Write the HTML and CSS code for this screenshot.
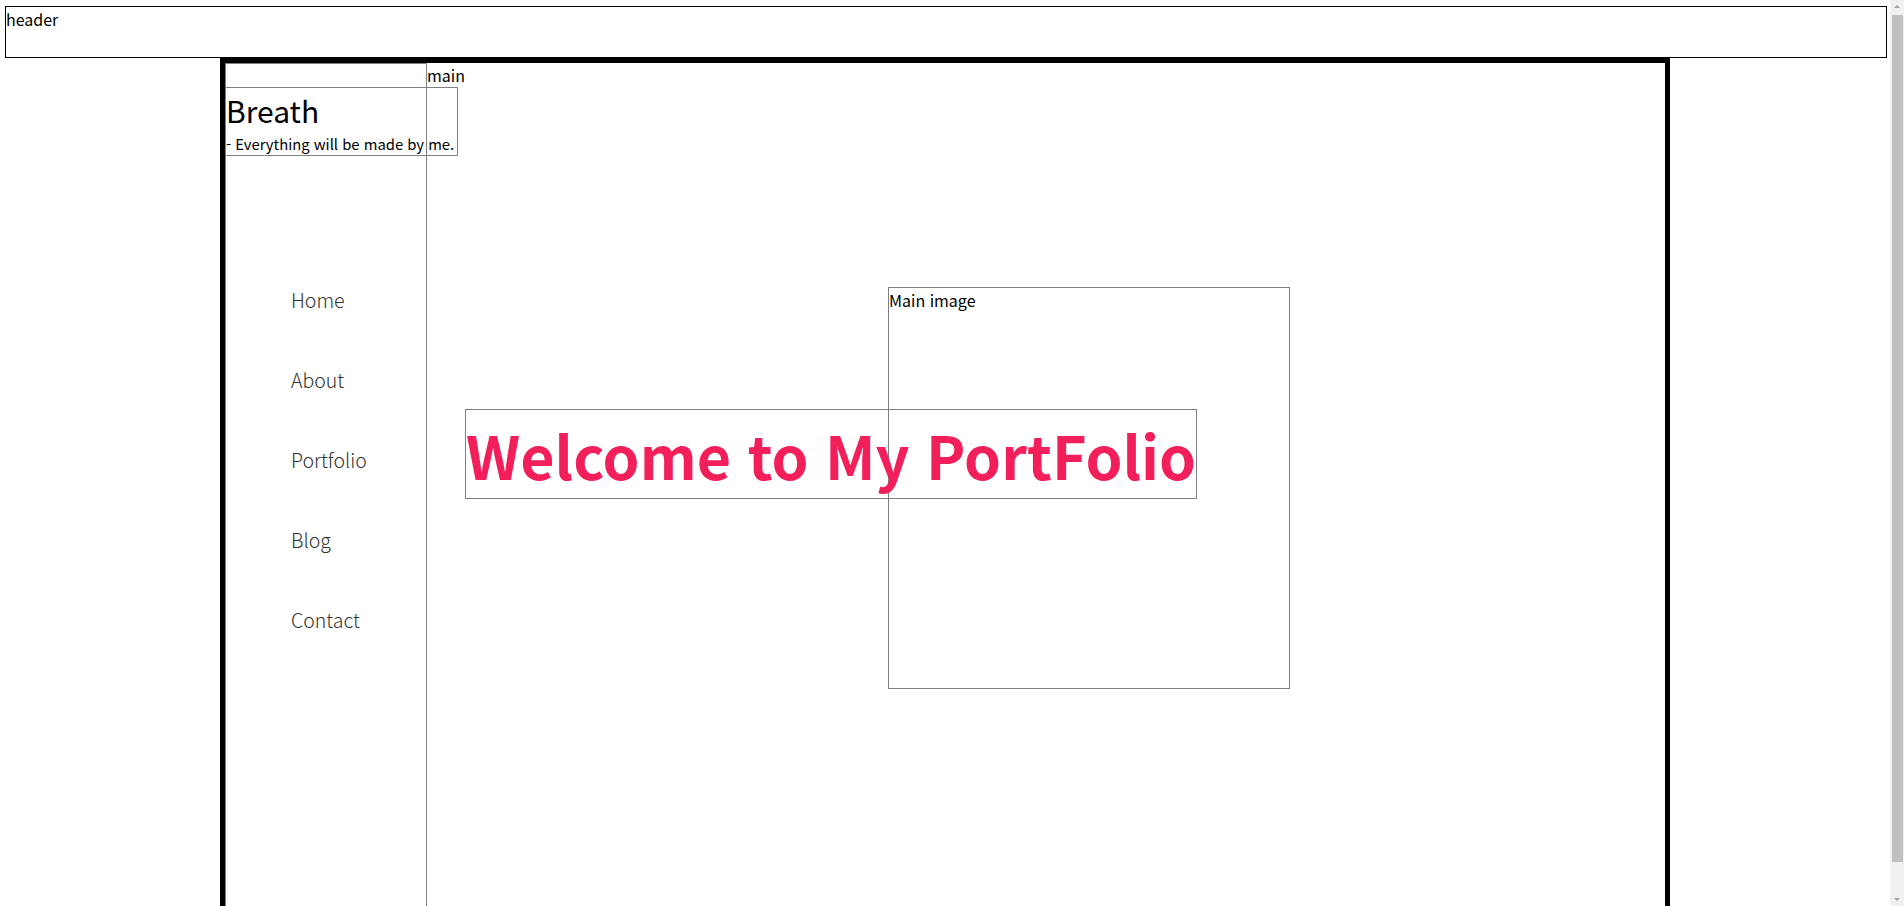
FILE: index.html
```html
<!DOCTYPE html>
<html lang="ko">
<head>
    <meta charset="UTF-8">
    <meta name="viewport" content="width=device-width, initial-scale=1.0">
    <title>Breath - Portfolio</title>
    <link rel="stylesheet" href="styles.css">
</head>
<body>
    <header class="site-header">header</header>

    <div class="wrap">
        <!-- Side menu -->
        <aside class="side">
            <div class="logo">
                <h1>Breath</h1>
                <p>- Everything will be made by me.</p>
            </div>
            <ul class="menu">
                <li><a href="#">Home</a></li>
                <li><a href="#">About</a></li>
                <li><a href="#">Portfolio</a></li>
                <li><a href="#">Blog</a></li>
                <li><a href="#">Contact</a></li>
            </ul>
        </aside>

        <main class="content">
            main
            <div class="stage">
                <div class="main-image">Main image</div>
                <h2 class="welcome">Welcome to My PortFolio</h2>
            </div>
        </main>
    </div>

    <!-- window scrollbar as it shows in the screenshot -->
    <div class="scrollbar">
        <span class="arrow up"></span>
        <span class="thumb"></span>
        <span class="arrow down"></span>
    </div>
</body>
</html>
```

FILE: styles.css
```css
body {
    margin: 0 14px 0 0;
    font-family: "Noto Sans CJK KR", "Noto Sans", sans-serif;
    font-size: 16px;
    color: #000;
}

.site-header {
    height: 50px;
    margin: 6px 3px 0 5px;
    border: 1px solid #000;
}

.wrap {
    display: flex;
    width: 1440px;
    height: 869px;
    margin: 0 auto;
    border: 5px solid #000;
}

.side {
    flex-shrink: 0;
    width: 200px;
    padding-top: 23px;
    border: 1px solid gray;
}

.logo {
    width: max-content;
    margin-left: -1px;
    padding-right: 3px;
    border: 1px solid gray;
}

.logo h1 {
    margin: 0;
    font-size: 30px;
    font-weight: 400;
    line-height: 45px;
}

.logo p {
    margin: 0;
    font-size: 14.8px;
    line-height: 22px;
}

.menu {
    list-style: none;
    margin: 0;
    padding: 130px 0 0 65px;
}

.menu li {
    height: 80px;
}

.menu a {
    color: #333;
    font-size: 19.5px;
    font-weight: 300;
    line-height: 28px;
    text-decoration: none;
}

.content {
    flex: 1;
}

.stage {
    display: grid;
    margin-top: 200px;
}

.stage > * {
    grid-area: 1 / 1;
    justify-self: start;
    align-self: start;
}

.main-image {
    width: 400px;
    height: 400px;
    margin-left: 461px;
    border: 1px solid gray;
}

.welcome {
    margin: 122px 0 0 38px;
    border: 1px solid gray;
    color: #f31f5b;
    font-size: 59.2px;
    font-weight: 700;
    line-height: 88px;
}

.scrollbar {
    position: fixed;
    top: 0;
    right: 0;
    width: 14px;
    height: 100%;
    background: #f1f1f1;
}

.scrollbar .thumb {
    position: absolute;
    top: 15px;
    left: 2px;
    right: 1px;
    height: 847px;
    background: #c1c1c1;
}

.scrollbar .arrow {
    position: absolute;
    left: 4px;
    border-left: 3px solid transparent;
    border-right: 3px solid transparent;
}

.scrollbar .up {
    top: 5px;
    border-bottom: 3px solid #a3a3a3;
}

.scrollbar .down {
    bottom: 5px;
    border-top: 3px solid #a3a3a3;
}
```
